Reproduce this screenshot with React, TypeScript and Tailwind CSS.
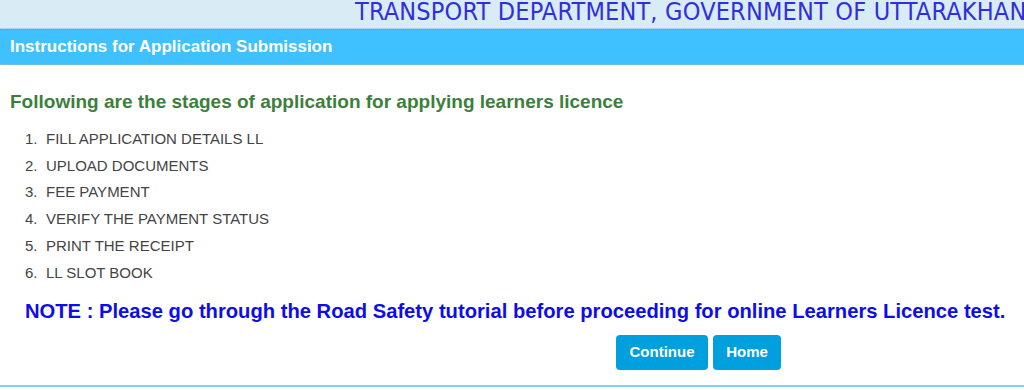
import React from "react";

const stages = [
  "FILL APPLICATION DETAILS LL",
  "UPLOAD DOCUMENTS",
  "FEE PAYMENT",
  "VERIFY THE PAYMENT STATUS",
  "PRINT THE RECEIPT",
  "LL SLOT BOOK",
];

export default function App() {
  return (
    <div className="w-[1024px] h-[390px] overflow-hidden bg-white font-['Liberation_Sans',Arial,sans-serif]">
      {/* Top banner */}
      <div className="h-[29px] bg-[#d9ebf5] border-b border-[#a9d6ee] overflow-hidden">
        <div className="pl-[355px] whitespace-nowrap text-[#2f2fe0] text-[25px] leading-[24px] tracking-[0.2px] font-['DejaVu_Sans_Condensed','DejaVu_Sans',sans-serif] [font-stretch:condensed]">
          TRANSPORT DEPARTMENT, GOVERNMENT OF UTTARAKHAN
        </div>
      </div>

      {/* Section title bar */}
      <div className="h-[36px] bg-[#40c1ff] border-t border-[#2bb1ec] border-b border-dotted border-b-[#9ab8c8] flex items-center px-[10px]">
        <span className="text-white font-bold text-[17px]">Instructions for Application Submission</span>
      </div>

      {/* Body */}
      <div className="px-[10px] pt-[26px]">
        <h2 className="text-[#3b7f3b] font-bold text-[19px] leading-[22px]">
          Following are the stages of application for applying learners licence
        </h2>
        <ol className="mt-[13px] pl-[15px] text-[#444] text-[15px] leading-[26.7px]">
          {stages.map((s, i) => (
            <li key={s} className="flex">
              <span className="w-[21px]">{i + 1}.</span>
              <span>{s}</span>
            </li>
          ))}
        </ol>
        <p className="mt-[13px] pl-[15px] text-[#0d0de8] font-bold text-[20.2px] leading-[24px] whitespace-nowrap">
          NOTE : Please go through the Road Safety tutorial before proceeding for online Learners Licence test.
        </p>
        <div className="mt-[12px] flex gap-[5px] pl-[606px]">
          <button className="w-[92px] h-[35px] rounded-[4px] bg-[#00a0de] text-white font-bold text-[15px]">
            Continue
          </button>
          <button className="w-[68px] h-[35px] rounded-[4px] bg-[#00a0de] text-white font-bold text-[15px]">
            Home
          </button>
        </div>
      </div>
      <div className="mt-[15px] h-[2px] bg-[#83d0f2]" />
    </div>
  );
}
